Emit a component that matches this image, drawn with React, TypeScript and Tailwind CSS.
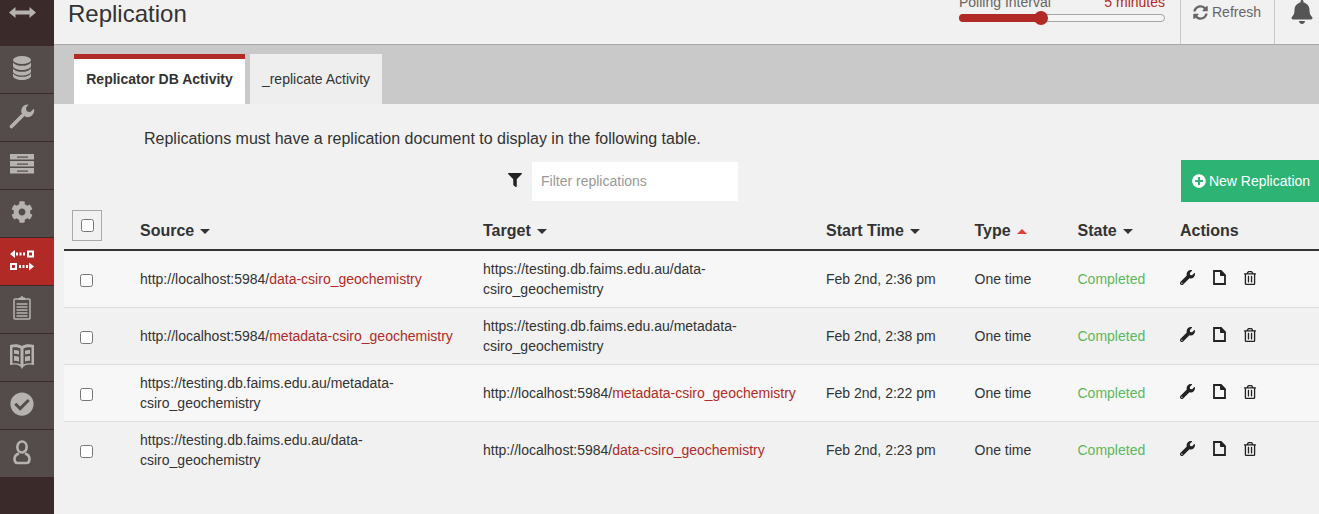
import React from "react";
import {
  FaBell,
  FaCheckCircle,
  FaCog,
  FaFilter,
  FaPlusCircle,
  FaRegTrashAlt,
  FaSyncAlt,
  FaWrench,
} from "react-icons/fa";

const ArrowsIcon = () => (
  <svg width="27" height="11" viewBox="0 0 27 11" fill="#b5b2b0">
    <path d="M0 5.500L6.500 0v3.500h14V0L27 5.500 20.500 11V7.500h-14V11z" />
  </svg>
);

const DatabaseIcon = () => (
  <svg width="18" height="24" viewBox="0 0 18 24" fill="#b5b2b0">
    <ellipse cx="9" cy="4" rx="9" ry="4" />
    <path d="M0 6.500C1.500 9 5 9.800 9 9.800s7.500-.8 9-3.300V10c0 2.200-4 4-9 4s-9-1.800-9-4z" />
    <path d="M0 12.500C1.500 15 5 15.800 9 15.800s7.500-.8 9-3.300V15.500c0 2.200-4 4-9 4s-9-1.800-9-4z" />
    <path d="M0 17.500C1.500 20 5 20.800 9 20.800s7.500-.8 9-3.300V20c0 2.200-4 4-9 4s-9-1.800-9-4z" />
  </svg>
);

const SideWrench = () => (
  <svg width="26" height="26" viewBox="0 0 26 26" fill="none">
    <path d="M2.500 23.500L13.500 12.500" stroke="#b5b2b0" strokeWidth="3.600" strokeLinecap="round" />
    <path
      d="M19.500 1.500a6.500 6.500 0 0 0-6.800 8.800l3.400 3.300a6.500 6.500 0 0 0 8.800-7.800l-3.800 3.500-3.400-1-.8-3.200z"
      fill="#b5b2b0"
    />
  </svg>
);

const ServerIcon = () => (
  <svg width="24" height="20" viewBox="0 0 24 20">
    <g fill="#b5b2b0">
      <rect y="0" width="24" height="5.500" />
      <rect y="7" width="24" height="5.500" />
      <rect y="14" width="24" height="5.500" />
    </g>
    <g fill="#544c4a">
      <rect x="7" y="2.500" width="11" height="1.200" />
      <rect x="7" y="9.500" width="11" height="1.200" />
      <rect x="7" y="16.500" width="11" height="1.200" />
    </g>
  </svg>
);

const ReplicationIcon = () => (
  <svg width="24" height="21" viewBox="0 0 24 21" fill="#ffffff">
    <path d="M0 4l5-4v8z" />
    <rect x="6" y="2.500" width="2" height="3" />
    <rect x="9.500" y="2.500" width="2" height="3" />
    <rect x="13" y="2.500" width="2" height="3" />
    <path fillRule="evenodd" d="M17 .5h7v7h-7zM19 2.500v3h3v-3z" />
    <path fillRule="evenodd" d="M0 13h7v7H0zM2 15v3h3v-3z" />
    <rect x="9" y="15" width="2" height="3" />
    <rect x="12.500" y="15" width="2" height="3" />
    <rect x="16" y="15" width="2" height="3" />
    <path d="M24 16.500l-5 4v-8z" />
  </svg>
);

const ClipboardIcon = () => (
  <svg width="18" height="24" viewBox="0 0 18 24" fill="none" stroke="#b5b2b0">
    <rect x="1" y="3" width="16" height="20" rx="1" strokeWidth="1.500" />
    <path d="M6 3.500V2h2.200V.8h1.600V2H12v1.500z" fill="#b5b2b0" strokeWidth="1" />
    <path d="M3.500 8h11M3.500 11h11M3.500 14h11M3.500 17h11M3.500 20h11" strokeWidth="1.300" />
  </svg>
);

const BookIcon = () => (
  <svg width="24" height="25" viewBox="0 0 24 25">
    <path
      d="M0 1c4.500-1.200 9-1 12 1 3-2 7.500-2.200 12-1v20c-4-1-8.500-.6-10.500 1.500L12 25l-1.500-2.500C8.500 20.400 4 20 0 21z"
      fill="#b5b2b0"
    />
    <path
      d="M2.500 3.500c2.800-.4 5.800 0 8 1v16c-2.200-1-5.200-1.400-8-1zM13.500 4.500c2.200-1 5.200-1.400 8-1v16c-2.800-.4-5.800 0-8 1z"
      fill="#544c4a"
    />
    <path
      d="M4 6c1.800-.1 3.600.2 5 .8v3.700c-1.400-.6-3.200-.9-5-.8zM15 6.800c1.400-.6 3.200-.9 5-.8v3.700c-1.800-.1-3.600.2-5 .8zM4 12c1.800-.1 3.600.2 5 .8v4.700c-1.400-.6-3.200-.9-5-.8zM15 12.800c1.400-.6 3.200-.9 5-.8v4.700c-1.800-.1-3.600.2-5 .8z"
      fill="#b5b2b0"
    />
  </svg>
);

const UserIcon = () => (
  <svg width="18" height="25" viewBox="0 0 18 25" fill="none" stroke="#b5b2b0" strokeWidth="2.600">
    <ellipse cx="9" cy="7" rx="4.700" ry="5.500" />
    <path d="M6 13.500c-2.500.8-4.500 2.500-4.500 5.500 0 2.500 1 4 3 4h9c2 0 3-1.500 3-4 0-3-2-4.700-4.500-5.500" />
  </svg>
);

const navItems = [
  { key: "databases", icon: <DatabaseIcon /> },
  { key: "setup", icon: <SideWrench /> },
  { key: "config", icon: <ServerIcon /> },
  { key: "settings", icon: <FaCog size={22} color="#b5b2b0" /> },
  { key: "replication", icon: <ReplicationIcon />, active: true },
  { key: "tasks", icon: <ClipboardIcon /> },
  { key: "docs", icon: <BookIcon /> },
  { key: "verify", icon: <FaCheckCircle size={24} color="#b5b2b0" /> },
  { key: "user", icon: <UserIcon /> },
];

const SortCaret = ({ up = false }: { up?: boolean }) =>
  up ? (
    <span className="ml-[6px] inline-block align-middle w-0 h-0 border-x-[5px] border-x-transparent border-b-[5px] border-b-[#e73d34]" />
  ) : (
    <span className="ml-[6px] inline-block align-middle w-0 h-0 border-x-[5px] border-x-transparent border-t-[5px] border-t-[#333333]" />
  );

const FileIcon = () => (
  <svg width="13" height="15" viewBox="0 0 13 15" fill="none" stroke="#222222" strokeWidth="1.800">
    <path d="M1 1h7l4 4v9H1z" />
    <path d="M7.500 .5V5.500h5z" fill="#222222" strokeWidth="1" />
  </svg>
);

const Link = ({ children }: { children: React.ReactNode }) => (
  <a className="text-[#b12a26]">{children}</a>
);

const rows = [
  {
    source: <>http://localhost:5984/<Link>data-csiro_geochemistry</Link></>,
    target: <>https://testing.db.faims.edu.au/data-<br />csiro_geochemistry</>,
    time: "Feb 2nd, 2:36 pm",
  },
  {
    source: <>http://localhost:5984/<Link>metadata-csiro_geochemistry</Link></>,
    target: <>https://testing.db.faims.edu.au/metadata-<br />csiro_geochemistry</>,
    time: "Feb 2nd, 2:38 pm",
  },
  {
    source: <>https://testing.db.faims.edu.au/metadata-<br />csiro_geochemistry</>,
    target: <>http://localhost:5984/<Link>metadata-csiro_geochemistry</Link></>,
    time: "Feb 2nd, 2:22 pm",
  },
  {
    source: <>https://testing.db.faims.edu.au/data-<br />csiro_geochemistry</>,
    target: <>http://localhost:5984/<Link>data-csiro_geochemistry</Link></>,
    time: "Feb 2nd, 2:23 pm",
  },
];

const Sidebar = () => (
  <div className="w-[54px] shrink-0 bg-[#3a2a2a] flex flex-col">
    <div className="h-[46px] flex justify-center pt-[7px] pr-[10px] shrink-0">
      <ArrowsIcon />
    </div>
    {navItems.map((item) => (
      <div
        key={item.key}
        className={
          item.active
            ? "h-[48px] shrink-0 flex items-center justify-center pr-[10px] pb-[3px] bg-[#b12a26] border-b border-[#3a2a2a]"
            : "h-[48px] shrink-0 flex items-center justify-center pr-[10px] pb-[3px] bg-[#544c4a] border-b border-[#3a2a2a]"
        }
      >
        {item.icon}
      </div>
    ))}
  </div>
);

const Header = () => (
  <div className="h-[45px] shrink-0 flex items-stretch border-b border-[#a9a9a9] bg-[#f1f1f1] overflow-hidden">
    <h1 className="ml-[14px] text-[24px] leading-[28px] text-[#333333] font-normal">Replication</h1>
    <div className="ml-auto w-[206px] -mt-[8px]">
      <div className="flex justify-between text-[14px] leading-[20px]">
        <span className="text-[#666666]">Polling Interval</span>
        <span className="text-[#b12a26]">5 minutes</span>
      </div>
      <div className="relative mt-[2px] h-[8px] rounded-full border border-[#a5a5a5] bg-[#f5f5f5]">
        <div className="absolute -left-px -top-px h-[8px] w-[82px] rounded-full bg-[#b12a26]" />
        <div className="absolute left-[74px] top-[-4px] h-[14px] w-[14px] rounded-full bg-[#b12a26]" />
      </div>
    </div>
    <div className="ml-[15px] w-[95px] border-x border-[#c9c9c9] flex items-start pt-[3px] pl-[12px] gap-[3px] text-[14px] leading-[18px] text-[#666666]">
      <FaSyncAlt size={15} className="mt-[2px]" />
      <span className="ml-[1px]">Refresh</span>
    </div>
    <div className="w-[44px] flex justify-center pl-[10px]">
      <FaBell size={24} color="#555555" />
    </div>
  </div>
);

const Tabs = () => (
  <div className="h-[59px] shrink-0 bg-[#c9c9c9] flex items-end pl-[20px] gap-[5px] text-[14px]">
    <div className="h-[50px] w-[171px] bg-white border-t-[5px] border-[#b12a26] pb-[5px] flex items-center justify-center font-bold text-[#333333]">
      Replicator DB Activity
    </div>
    <div className="h-[50px] w-[132px] bg-[#eeeeee] flex items-center justify-center text-[#333333]">
      _replicate Activity
    </div>
  </div>
);

const Table = () => (
  <table className="ml-[10px] w-[1255px] table-fixed border-collapse text-[14px] leading-[20px] text-[#333333]">
    <colgroup>
      <col className="w-[76px]" />
      <col className="w-[343px]" />
      <col className="w-[343px]" />
      <col className="w-[148.500px]" />
      <col className="w-[103px]" />
      <col className="w-[102.500px]" />
      <col className="w-[139px]" />
    </colgroup>
    <thead>
      <tr className="h-[42px] border-b-2 border-[#333333] text-[16px] font-bold text-left">
        <th className="p-0 align-top">
          <div className="mt-[2px] ml-[8px] flex h-[31px] w-[30px] items-center justify-center border border-[#a9a9a9]">
            <input type="checkbox" className="h-[13px] w-[13px] -mt-[1px]" />
          </div>
        </th>
        <th className="p-0 pt-[5px]">Source<SortCaret /></th>
        <th className="p-0 pt-[5px]">Target<SortCaret /></th>
        <th className="p-0 pt-[5px]">Start Time<SortCaret /></th>
        <th className="p-0 pt-[5px]">Type<SortCaret up /></th>
        <th className="p-0 pt-[5px]">State<SortCaret /></th>
        <th className="p-0 pt-[5px]">Actions</th>
      </tr>
    </thead>
    <tbody>
      {rows.map((row) => (
        <tr key={row.time} className="h-[57px] border-b border-[#dddddd] odd:bg-[#f7f7f7] last:border-b-0">
          <td className="p-0">
            <input type="checkbox" className="ml-[16px] mt-[4px] block h-[13px] w-[13px]" />
          </td>
          <td className="p-0">{row.source}</td>
          <td className="p-0">{row.target}</td>
          <td className="p-0">{row.time}</td>
          <td className="p-0">One time</td>
          <td className="p-0 text-[#5cb85c]">Completed</td>
          <td className="p-0">
            <div className="flex items-center text-[#222222] -mt-[2px]">
              <FaWrench size={15} />
              <span className="ml-[18px] flex"><FileIcon /></span>
              <FaRegTrashAlt size={14} className="ml-[17px]" />
            </div>
          </td>
        </tr>
      ))}
    </tbody>
  </table>
);

export default function App() {
  return (
    <div
      className="flex h-[514px] w-[1319px] overflow-hidden bg-[#f1f1f1]"
      style={{ fontFamily: '"Liberation Sans", Arial, sans-serif' }}
    >
      <Sidebar />
      <div className="flex-1 min-w-0 flex flex-col">
        <Header />
        <Tabs />
        <p className="ml-[90px] mt-[24px] text-[16px] leading-[22px] text-[#333333]">
          Replications must have a replication document to display in the following table.
        </p>
        <div className="flex h-[42px] mt-[10px] items-center justify-end">
          <FaFilter size={14} color="#222222" className="-mt-[3px]" />
          <input
            placeholder="Filter replications"
            className="ml-[10px] mr-[443px] h-[39px] w-[206px] bg-white px-[9px] text-[14px] text-[#333333] placeholder:text-[#999999] outline-none"
          />
          <div className="flex h-[42px] w-[138px] items-center justify-center gap-[3px] pl-[2px] bg-[#2db474] text-[14px] text-white">
            <FaPlusCircle size={14} />
            <span>New Replication</span>
          </div>
        </div>
        <div className="mt-[6px]">
          <Table />
        </div>
      </div>
    </div>
  );
}
